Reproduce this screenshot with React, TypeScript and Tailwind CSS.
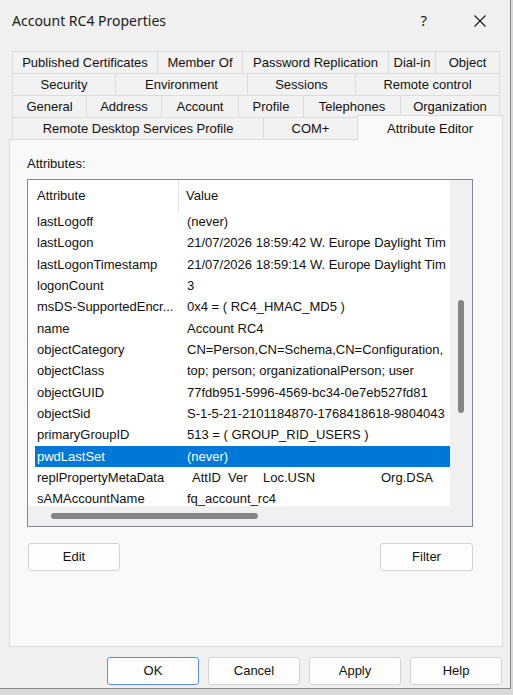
import React from 'react';

// tab rows, widths taken from the dialog
const tabRows: { label: string; w: string }[][] = [
  [
    { label: 'Published Certificates', w: 'w-[145px]' },
    { label: 'Member Of', w: 'w-[85px]' },
    { label: 'Password Replication', w: 'w-[146px]' },
    { label: 'Dial-in', w: 'w-[47px]' },
    { label: 'Object', w: 'w-[65px]' },
  ],
  [
    { label: 'Security', w: 'w-[103px]' },
    { label: 'Environment', w: 'w-[132px]' },
    { label: 'Sessions', w: 'w-[108px]' },
    { label: 'Remote control', w: 'w-[145px]' },
  ],
  [
    { label: 'General', w: 'w-[74px]' },
    { label: 'Address', w: 'w-[75px]' },
    { label: 'Account', w: 'w-[77px]' },
    { label: 'Profile', w: 'w-[65px]' },
    { label: 'Telephones', w: 'w-[97px]' },
    { label: 'Organization', w: 'w-[100px]' },
  ],
];

const attributes: { name: string; value: string }[] = [
  { name: 'lastLogoff', value: '(never)' },
  { name: 'lastLogon', value: '21/07/2026 18:59:42 W. Europe Daylight Tim' },
  { name: 'lastLogonTimestamp', value: '21/07/2026 18:59:14 W. Europe Daylight Tim' },
  { name: 'logonCount', value: '3' },
  { name: 'msDS-SupportedEncr...', value: '0x4 = ( RC4_HMAC_MD5 )' },
  { name: 'name', value: 'Account RC4' },
  { name: 'objectCategory', value: 'CN=Person,CN=Schema,CN=Configuration,' },
  { name: 'objectClass', value: 'top; person; organizationalPerson; user' },
  { name: 'objectGUID', value: '77fdb951-5996-4569-bc34-0e7eb527fd81' },
  { name: 'objectSid', value: 'S-1-5-21-2101184870-1768418618-9804043' },
  { name: 'primaryGroupID', value: '513 = ( GROUP_RID_USERS )' },
  { name: 'pwdLastSet', value: '(never)' },
  { name: 'replPropertyMetaData', value: '' },
  { name: 'sAMAccountName', value: 'fq_account_rc4' },
];

function Tab({ label, w, last }: { label: string; w: string; last: boolean }) {
  return (
    <div
      className={`${w} h-[22px] flex items-center justify-center bg-[#f2f2f2] border-t border-l border-[#dcdcdc] ${last ? 'border-r' : ''}`}
    >
      {label}
    </div>
  );
}

function Button({ children, primary }: { children: React.ReactNode; primary?: boolean }) {
  return (
    <div
      className={`w-[92px] h-[28px] flex items-center justify-center rounded-[3px] bg-[#fdfdfd] border ${primary ? 'border-[#5294e2]' : 'border-[#d3d3d3]'}`}
    >
      {children}
    </div>
  );
}

export default function App() {
  return (
    <div
      className="w-[513px] h-[695px] bg-[#d9d9d9] text-[13px] text-[#111]"
      style={{ fontFamily: '"Liberation Sans", Arial, sans-serif' }}
    >
      <div className="w-[511px] h-[689px] bg-[#f0f0f0] border-r border-b border-[#8a8a8a] flex flex-col">
        {/* title bar */}
        <div className="h-[40px] flex items-center pl-[12px] pr-[24px]">
          <span className="text-[14px] text-[#1a1a1a] flex-1" style={{ fontFamily: '"Noto Sans", sans-serif' }}>
            Account RC4 Properties
          </span>
          <span className="text-[15px] text-[#1a1a1a] mr-[47px]" style={{ fontFamily: '"Noto Sans", sans-serif' }}>
            ?
          </span>
          <svg width="12" height="12" viewBox="0 0 12 12" className="mt-[1px]">
            <path d="M0.5 0.5 L11.5 11.5 M11.5 0.5 L0.5 11.5" stroke="#1a1a1a" strokeWidth="1.1" fill="none" />
          </svg>
        </div>

        {/* tabs */}
        <div className="mt-[11px] flex flex-col">
          {tabRows.map((row, i) => (
            <div key={i} className="flex ml-[12px]">
              {row.map((t, j) => (
                <Tab key={t.label} label={t.label} w={t.w} last={j === row.length - 1} />
              ))}
            </div>
          ))}
          <div className="flex items-end h-[25px] -mt-[3px] ml-[12px]">
            <Tab label="Remote Desktop Services Profile" w="w-[251px]" last={false} />
            <Tab label="COM+" w="w-[94px]" last={false} />
            <div className="relative z-10 w-[146px] h-[25px] translate-y-[1px] flex items-start justify-center pt-[3px] bg-[#f9f9f9] border-t border-l border-r border-[#dcdcdc]">
              Attribute Editor
            </div>
          </div>
        </div>

        {/* tab panel */}
        <div className="ml-[9px] w-[494px] h-[508px] bg-[#f9f9f9] border border-[#dcdcdc] pl-[17px] pt-[16px] flex flex-col">
          <div className="h-[16px] leading-[16px]">Attributes:</div>

          <div className="mt-[7px] w-[446px] h-[348px] border border-[#828790] bg-white flex flex-col">
            <div className="flex-1 flex min-h-0">
              <div className="flex-1 overflow-hidden">
                {/* header */}
                <div className="h-[31px] flex items-center">
                  <div className="w-[151px] h-full pl-[9px] flex items-center border-r border-[#e5e5e5]">Attribute</div>
                  <div className="pl-[7px]">Value</div>
                </div>
                {attributes.map((a) => {
                  const selected = a.name === 'pwdLastSet';
                  return (
                    <div
                      key={a.name}
                      className={`ml-[7px] h-[21.33px] flex items-center whitespace-nowrap ${selected ? 'bg-[#0078d7] text-white' : ''}`}
                    >
                      <div className="w-[152px] shrink-0 pl-[2px]">{a.name}</div>
                      {a.name === 'replPropertyMetaData' ? (
                        <div className="flex pl-[5px]">
                          <span className="w-[36px]">AttID</span>
                          <span className="w-[35px]">Ver</span>
                          <span className="w-[118px]">Loc.USN</span>
                          <span>Org.DSA</span>
                        </div>
                      ) : (
                        <div>{a.value}</div>
                      )}
                    </div>
                  );
                })}
              </div>
              {/* vertical scrollbar */}
              <div className="w-[22px] bg-[#f0f0f0] pt-[120px] flex justify-center">
                <div className="w-[6px] h-[113px] rounded-full bg-[#858585]" />
              </div>
            </div>
            {/* horizontal scrollbar */}
            <div className="h-[20px] flex">
              <div className="flex-1 bg-[#f0f0f0] flex items-center pl-[23px]">
                <div className="w-[207px] h-[6px] rounded-full bg-[#858585]" />
              </div>
              <div className="w-[22px] bg-[#f0f0f0]" />
            </div>
          </div>

          <div className="mt-[16px] w-[446px] flex justify-between pl-[1px]">
            <Button>Edit</Button>
            <div className="w-[93px] h-[28px] flex items-center justify-center rounded-[3px] bg-[#fdfdfd] border border-[#d3d3d3]">
              Filter
            </div>
          </div>
        </div>

        {/* dialog buttons */}
        <div className="mt-[10px] flex justify-end gap-[9px] pr-[8px]">
          <Button primary>OK</Button>
          <Button>Cancel</Button>
          <Button>Apply</Button>
          <Button>Help</Button>
        </div>
      </div>
    </div>
  );
}
